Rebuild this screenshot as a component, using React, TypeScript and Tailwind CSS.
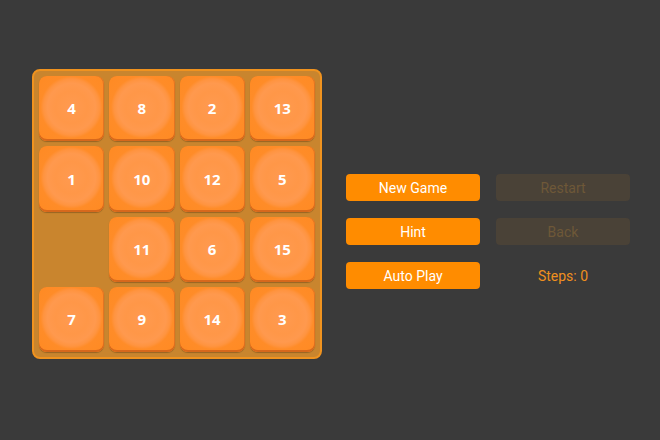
import React from "react";

const tiles: (number | null)[] = [4, 8, 2, 13, 1, 10, 12, 5, null, 11, 6, 15, 7, 9, 14, 3];

export default function App() {
  return (
    <div className="w-[660px] h-[440px] bg-[#3a3a3a] flex items-start pl-[32px] pt-[69px]" style={{ fontFamily: "Roboto, 'Liberation Sans', sans-serif" }}>
      <div className="w-[290px] h-[290px] rounded-[8px] border-2 border-[#f0931f] bg-[#c9852e] p-[5px] grid grid-cols-4 grid-rows-4 gap-[5px]">
        {tiles.map((t, i) =>
          t === null ? (
            <div key={i} />
          ) : (
            <div
              key={i}
              className="rounded-[8px] flex items-center justify-center text-white text-[15px] font-bold bg-[radial-gradient(circle_at_50%_48%,#ff9a50_0px,#ff9748_16px,#ff994e_24px,#ff9440_28px,#ff8c28_31px,#ff8a22_100%)] shadow-[inset_0_-2px_0_#d7681c,inset_-1px_0_0_#e27422,0_1px_1px_rgba(0,0,0,0.25)]"
              style={{ fontFamily: "'Open Sans', 'Liberation Sans', sans-serif" }}
            >
              {t}
            </div>
          )
        )}
      </div>
      <div className="ml-[24px] mt-[105px] grid grid-cols-[134px_134px] auto-rows-[27px] gap-x-[16px] gap-y-[17px] text-[14px]">
        <div className="rounded-[4px] bg-[#ff8c00] text-white flex items-center justify-center pt-px">New Game</div>
        <div className="rounded-[4px] bg-[#4a4237] text-[#6e5838] flex items-center justify-center pt-px">Restart</div>
        <div className="rounded-[4px] bg-[#ff8c00] text-white flex items-center justify-center pt-px">Hint</div>
        <div className="rounded-[4px] bg-[#4a4237] text-[#6e5838] flex items-center justify-center pt-px">Back</div>
        <div className="rounded-[4px] bg-[#ff8c00] text-white flex items-center justify-center pt-px">Auto Play</div>
        <div className="text-[#f0901e] flex items-center justify-center pt-px">Steps: 0</div>
      </div>
    </div>
  );
}
